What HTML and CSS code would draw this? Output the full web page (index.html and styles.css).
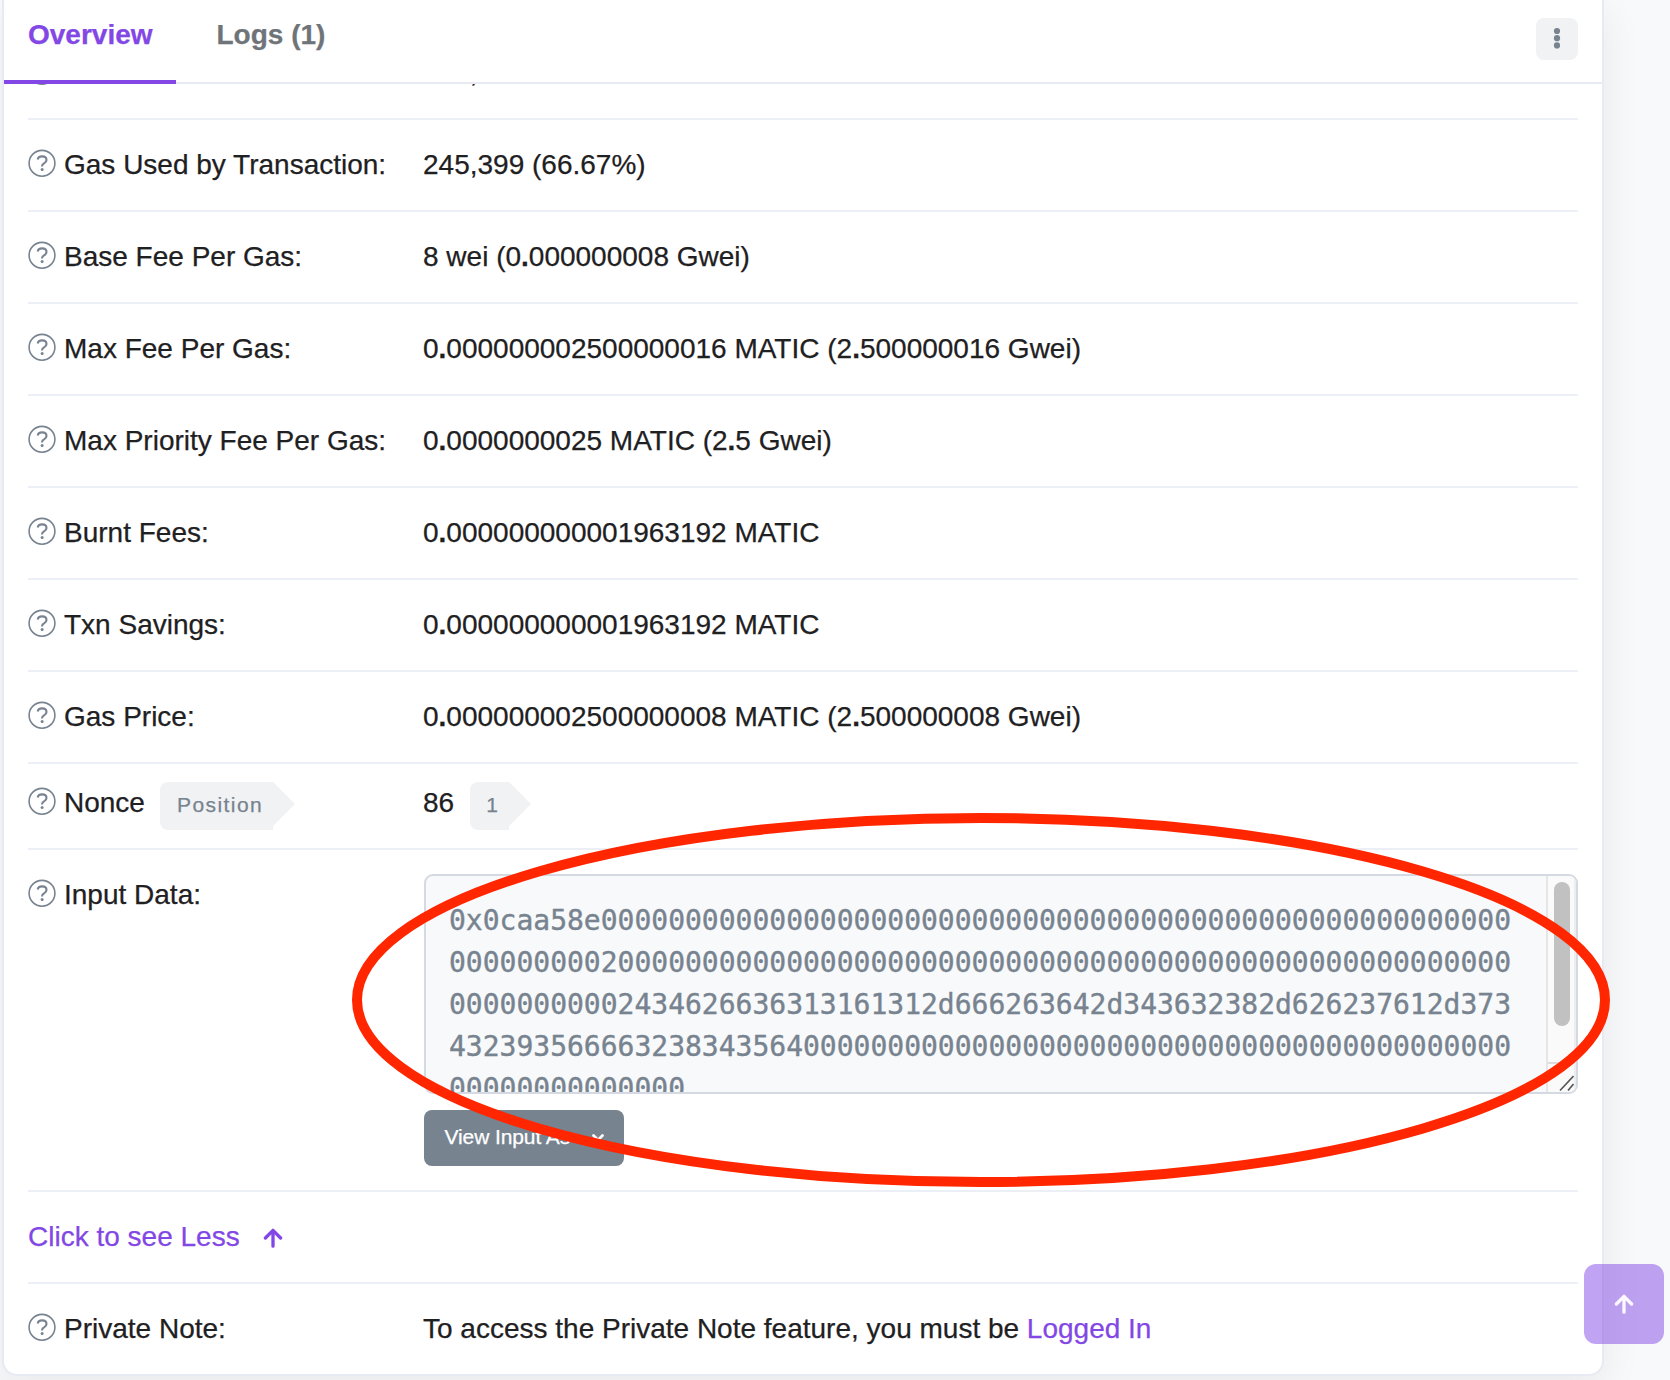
FILE: index.html
```html
<!DOCTYPE html>
<html lang="en">
<head>
<meta charset="utf-8">
<title>Transaction Details</title>
<link rel="stylesheet" href="styles.css">
</head>
<body>
<svg class="defs" width="0" height="0" aria-hidden="true">
  <symbol id="help" viewBox="0 0 28 28">
    <circle cx="14" cy="14.300" r="12.900" fill="none" stroke="currentColor" stroke-width="1.6"/>
    <path d="M9.7 10.5C10 8.500 11.600 7.400 14.100 7.400c2.600 0 4.400 1.400 4.400 3.500 0 1.800-1 2.600-2.400 3.400-1.400.8-2 1.400-2 2.600v.5" fill="none" stroke="currentColor" stroke-width="2.100"/>
    <circle cx="14.100" cy="20.600" r="1.500" fill="currentColor"/>
  </symbol>
  <symbol id="up" viewBox="0 0 20 20">
    <path d="M10 18.200V2.400M2.400 10L10 2.300l7.600 7.700" fill="none" stroke="currentColor" stroke-width="3.300" stroke-linecap="round" stroke-linejoin="round"/>
  </symbol>
</svg>
<main class="card">
  <header class="tabs">
    <a class="tab active">Overview</a>
    <a class="tab">Logs (1)</a>
    <button class="more" aria-label="More"><svg width="8" height="22" viewBox="0 0 8 22"><circle cx="4" cy="4" r="3.100"/><circle cx="4" cy="11.200" r="3.100"/><circle cx="4" cy="18.400" r="3.100"/></svg></button>
  </header>
  <div class="rows">
    <div class="row cut">
      <div class="label"><svg class="help"><use href="#help"/></svg><span>Gas Limit:</span></div>
      <div class="value">368,098</div>
    </div>
    <div class="row">
      <div class="label"><svg class="help"><use href="#help"/></svg><span>Gas Used by Transaction:</span></div>
      <div class="value">245,399 (66.67%)</div>
    </div>
    <div class="row">
      <div class="label"><svg class="help"><use href="#help"/></svg><span>Base Fee Per Gas:</span></div>
      <div class="value">8 wei (0<b>.</b>000000008 Gwei)</div>
    </div>
    <div class="row">
      <div class="label"><svg class="help"><use href="#help"/></svg><span>Max Fee Per Gas:</span></div>
      <div class="value">0<b>.</b>000000002500000016 MATIC (2<b>.</b>500000016 Gwei)</div>
    </div>
    <div class="row">
      <div class="label"><svg class="help"><use href="#help"/></svg><span>Max Priority Fee Per Gas:</span></div>
      <div class="value">0<b>.</b>0000000025 MATIC (2<b>.</b>5 Gwei)</div>
    </div>
    <div class="row">
      <div class="label"><svg class="help"><use href="#help"/></svg><span>Burnt Fees:</span></div>
      <div class="value">0<b>.</b>000000000001963192 MATIC</div>
    </div>
    <div class="row">
      <div class="label"><svg class="help"><use href="#help"/></svg><span>Txn Savings:</span></div>
      <div class="value">0<b>.</b>000000000001963192 MATIC</div>
    </div>
    <div class="row">
      <div class="label"><svg class="help"><use href="#help"/></svg><span>Gas Price:</span></div>
      <div class="value">0<b>.</b>000000002500000008 MATIC (2<b>.</b>500000008 Gwei)</div>
    </div>
    <div class="row nonce">
      <div class="label"><svg class="help"><use href="#help"/></svg><span>Nonce</span><span class="tag">Position</span></div>
      <div class="value">86<span class="tag">1</span></div>
    </div>
    <div class="row">
      <div class="label"><svg class="help"><use href="#help"/></svg><span>Input Data:</span></div>
      <div class="value input">
        <div class="data">
          <pre class="hex">0x0caa58e000000000000000000000000000000000000000000000000000000
000000000200000000000000000000000000000000000000000000000000000
00000000002434626636313161312d666263642d343632382d626237612d373
432393566663238343564000000000000000000000000000000000000000000
00000000000000</pre>
          <div class="scroll">
            <div class="thumb"></div>
            <svg class="grip" viewBox="0 0 26 28"><path d="M12 26.500L25.500 12M20 26.500l5.500-6.500" stroke="#555" stroke-width="1.600" fill="none"/></svg>
          </div>
        </div>
        <button class="view"><span>View Input As</span><svg width="14" height="10" viewBox="0 0 14 10"><path d="M2.500 2.500L7 7l4.500-4.500" fill="none" stroke="currentColor" stroke-width="2.800" stroke-linecap="round"/></svg></button>
      </div>
    </div>
    <div class="row less"><a>Click to see Less</a><svg class="up"><use href="#up"/></svg></div>
    <div class="row last">
      <div class="label"><svg class="help"><use href="#help"/></svg><span>Private Note:</span></div>
      <div class="value">To access the Private Note feature, you must be <a>Logged In</a></div>
    </div>
  </div>
</main>
<button class="top" aria-label="Back to top"><svg class="up"><use href="#up"/></svg></button>
<svg class="mark" width="1262" height="378" viewBox="0 0 1262 378"><ellipse cx="631" cy="189" rx="624" ry="182" fill="none" stroke="#ff2600" stroke-width="10"/></svg>
</body>
</html>
```
FILE: styles.css
```css
* { box-sizing: border-box; }
body {
  margin: 0;
  height: 1380px;
  overflow: hidden;
  position: relative;
  background: #f8f9fb;
  font: 28px/42px "Liberation Sans", Arial, sans-serif;
  color: #1e2022;
  -webkit-text-stroke: .25px currentColor;
}
.defs { display: block; height: 0; }
button { border: 0; padding: 0; font-family: inherit; }
a { color: #8247e5; }
.card {
  width: 1602px;
  height: 1376px;
  margin-left: 2px;
  background: #fff;
  border: 2px solid #e7eaf3;
  border-top: 0;
  border-radius: 0 0 15px 15px;
  box-shadow: 0 12px 40px rgba(30, 32, 34, .07);
}
.tabs {
  display: flex;
  height: 84px;
  border-bottom: 2px solid #e7eaf3;
}
.tab {
  height: 84px;
  margin-right: 16.500px;
  padding: 14px 24px 0;
  font-weight: 700;
  color: #6f7479;
  white-space: nowrap;
}
.tab.active { width: 172px; color: #8247e5; border-bottom: 4px solid #8247e5; }
.more {
  width: 42px;
  height: 42px;
  margin: 18px 24px 0 auto;
  border-radius: 8px;
  background: #f1f2f4;
  display: flex;
  justify-content: center;
  padding-top: 9px;
}
.more svg { fill: #77838f; }
.rows { padding: 0 24px; overflow: hidden; }
.row {
  display: flex;
  min-height: 92px;
  padding: 24px 0;
  border-bottom: 2px solid #ecf0f6;
}
.row.cut { margin-top: -56px; }
.row.last { border: 0; }
.label { display: flex; width: 395px; white-space: nowrap; }
.help { width: 28px; height: 28px; margin: 5px 8px 0 0; color: #77838f; flex: none; }
.value { flex: 1; white-space: nowrap; }
.nonce { min-height: 86px; height: 86px; padding: 18px 0; }
.nonce .value { display: flex; }
.tag {
  position: relative;
  height: 48px;
  margin-left: 15.500px;
  padding: 2px 10px 0 16.500px;
  border-radius: 8px 0 0 8px;
  background: #f1f2f4;
  color: #77838f;
  font-size: 21px;
  letter-spacing: 1.450px;
}
.tag::after {
  content: "";
  position: absolute;
  left: 100%;
  top: 0;
  border: 22px solid transparent;
  border-left-color: #f1f2f4;
  border-right: 0;
}
.input { padding-left: 1px; }
.data {
  display: flex;
  height: 220px;
  overflow: hidden;
  border: 2px solid #d5dae2;
  border-radius: 9px;
  background: #f8f9fb;
}
.hex {
  flex: 1;
  margin: 0;
  padding: 24px 0 0 23px;
  font: 28px/42px "DejaVu Sans Mono", monospace;
  color: #77838f;
  -webkit-text-stroke: .4px #77838f;
}
.scroll {
  width: 30px;
  display: flex;
  flex-direction: column;
  justify-content: space-between;
  background: #fafafa;
  border-left: 2px solid #e6e6e6;
  border-right: 2px solid #ededed;
}
.thumb { width: 16px; height: 144px; margin: 6px 0 0 6px; border-radius: 8px; background: #c1c1c1; }
.grip { width: 26px; height: 30px; border-top: 2px solid #dcdcdc; }
.view {
  display: flex;
  width: 200px;
  height: 56px;
  margin-top: 16px;
  padding: 9px 19px 0 20.500px;
  justify-content: space-between;
  border-radius: 8px;
  background: #77838f;
  color: #fff;
  font-size: 21px;
  letter-spacing: -.1px;
  line-height: 36px;
}
.view svg { margin-top: 14px; }
.up { width: 20px; height: 20px; }
.less { color: #8247e5; }
.less .up { margin: 12px 0 0 23px; }
.top {
  position: absolute;
  left: 1584px;
  top: 1264px;
  width: 80px;
  height: 80px;
  border-radius: 12px;
  background: rgba(130, 71, 229, .5);
  color: #fbf9fe;
  display: grid;
  place-items: center;
}
.mark { position: absolute; left: 350px; top: 811px; pointer-events: none; }
```
